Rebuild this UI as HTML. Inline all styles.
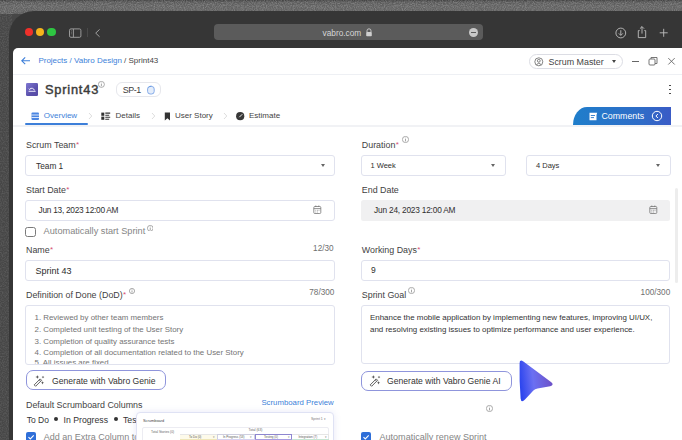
<!DOCTYPE html>
<html><head><meta charset="utf-8">
<style>
*{box-sizing:border-box;margin:0;padding:0}
html,body{width:682px;height:440px;overflow:hidden;background:#474747;font-family:"Liberation Sans",sans-serif}
.a{position:absolute}
.noise{left:0;top:0;width:682px;height:14px;background:linear-gradient(#3e3e3e,#5a5a5a 2px,#636363 6px,#5c5c5c)}
.frame{left:9.4px;top:11px;width:700px;height:460px;background:#363636;border-top-left-radius:25px}
.dot{width:8.4px;height:8.4px;border-radius:50%}
.url{left:214px;top:24px;width:269px;height:16px;background:#5b5b5b;border-radius:4px}
.content{left:13px;top:47.5px;width:700px;height:400px;background:#fff;border-top-left-radius:5px}
.t{white-space:nowrap;line-height:1}
.lbl{font-size:8.9px;color:#3f3f3f}
.req{color:#d64d72;font-size:8px;position:relative;top:-1.2px;left:0.4px}
.box{border:1px solid #e0e2ee;border-radius:3px;background:#fff}
.itxt{font-size:7.8px;color:#2f2f2f}
.caret{width:0;height:0;border-left:2.6px solid transparent;border-right:2.6px solid transparent;border-top:3px solid #666}
.info{width:7px;height:7px;border:0.7px solid #8a8a8a;border-radius:50%}
.cnt{font-size:8.2px;color:#6f6f6f}
</style></head><body>
<div class="a noise"></div>
<svg class="a" style="left:0;top:0" width="682" height="14"><filter id="nz" x="0" y="0" width="100%" height="100%"><feTurbulence type="fractalNoise" baseFrequency="0.9" numOctaves="2" seed="3"/><feColorMatrix type="matrix" values="0 0 0 0 0.5  0 0 0 0 0.5  0 0 0 0 0.5  1.6 0 0 0 -0.55"/></filter><rect width="682" height="14" filter="url(#nz)" opacity="0.5"/></svg>
<svg class="a" style="left:0;top:10px" width="12" height="430"><filter id="nz2" x="0" y="0" width="100%" height="100%"><feTurbulence type="fractalNoise" baseFrequency="0.8" numOctaves="2" seed="7"/><feColorMatrix type="matrix" values="0 0 0 0 0.45  0 0 0 0 0.45  0 0 0 0 0.45  1.2 0 0 0 -0.45"/></filter><rect width="12" height="430" filter="url(#nz2)" opacity="0.35"/></svg>
<div class="a frame"></div>
<!-- traffic lights -->
<div class="a dot" style="left:24.7px;top:27.8px;background:#f0302a"></div>
<div class="a dot" style="left:36px;top:27.8px;background:#f5b41c"></div>
<div class="a dot" style="left:47.2px;top:27.8px;background:#2ec542"></div>
<!-- sidebar icon -->
<svg class="a" style="left:68px;top:28px" width="15" height="11"><rect x="1.5" y="0.9" width="11.4" height="8.4" rx="1.4" stroke="#a0a0a0" stroke-width="0.95" fill="none"/><path d="M5.4 1 V9.3" stroke="#a0a0a0" stroke-width="0.95"/><path d="M3 2.8 H4 M3 4.3 H4 M3 5.8 H4" stroke="#8a8a8a" stroke-width="0.6"/></svg>
<div class="a" style="left:87.3px;top:28px;width:0.7px;height:9px;background:#4a4a4a"></div>
<svg class="a" style="left:93px;top:27px" width="9" height="12"><path d="M6.6 2.4 L2.7 6.1 L6.6 9.8" stroke="#a0a0a0" stroke-width="1" fill="none"/></svg>
<div class="a url"></div>
<div class="a t" style="left:322.5px;top:28.8px;font-size:8.3px;color:#d6d6d6">vabro.com</div>
<svg class="a" style="left:364.5px;top:27.5px" width="8" height="9"><path d="M2 4 V2.8 A2 2 0 0 1 6 2.8 V4" stroke="#cfcfcf" stroke-width="0.9" fill="none"/><rect x="1.2" y="4" width="5.6" height="4.3" rx="0.8" fill="#cfcfcf"/></svg>
<div class="a" style="left:468.5px;top:28px;width:9px;height:9px;border-radius:50%;background:#c8c8c8"></div>
<div class="a" style="left:470.5px;top:32px;width:5px;height:1px;background:#5b5b5b"></div>
<!-- right browser icons -->
<svg class="a" style="left:614px;top:26px" width="14" height="14"><circle cx="6.8" cy="7" r="4.9" stroke="#bdbdbd" stroke-width="0.9" fill="none"/><path d="M6.8 4.2 V9.2 M4.8 7.4 L6.8 9.4 L8.8 7.4" stroke="#bdbdbd" stroke-width="0.9" fill="none"/></svg>
<svg class="a" style="left:636px;top:25px" width="12" height="14"><path d="M3.7 5.6 H2.3 V12.6 H9.7 V5.6 H8.3 M6 1.6 V8.6 M3.9 3.7 L6 1.6 L8.1 3.7" stroke="#bdbdbd" stroke-width="0.9" fill="none"/></svg>
<svg class="a" style="left:658px;top:27px" width="12" height="12"><path d="M5.7 1.8 V9.8 M1.7 5.8 H9.7" stroke="#bdbdbd" stroke-width="0.9" fill="none"/></svg>

<div class="a content"></div>
<!-- header -->
<svg class="a" style="left:20px;top:56px" width="12" height="10"><path d="M10 4.8 H2 M5.2 1.4 L1.8 4.8 L5.2 8.2" stroke="#3d7fd9" stroke-width="1.1" fill="none"/></svg>
<div class="a t" style="left:38.4px;top:56.8px;font-size:8px;color:#3d7fd9">Projects / Vabro Design <span style="color:#444">/ Sprint43</span></div>
<div class="a" style="left:13px;top:73.5px;width:670px;height:1px;background:#eef0f4"></div>
<!-- scrum master -->
<div class="a" style="left:529px;top:54px;width:94px;height:15px;border:1px solid #dcdde4;border-radius:8px"></div>
<svg class="a" style="left:534px;top:56.5px" width="10" height="10"><circle cx="4.8" cy="4.8" r="4" stroke="#666" stroke-width="0.8" fill="none"/><circle cx="4.8" cy="3.8" r="1.4" stroke="#666" stroke-width="0.8" fill="none"/><path d="M2.4 7.6 Q4.8 4.8 7.2 7.6" stroke="#666" stroke-width="0.8" fill="none"/></svg>
<div class="a t" style="left:548.5px;top:57.5px;font-size:8.9px;color:#444">Scrum Master</div>
<div class="a caret" style="left:611.5px;top:60px;border-top-color:#444"></div>
<div class="a" style="left:631.5px;top:60.8px;width:7.5px;height:1px;background:#666"></div>
<svg class="a" style="left:648px;top:56px" width="11" height="11"><rect x="1" y="3" width="6" height="6" stroke="#666" stroke-width="0.9" fill="none" rx="1"/><path d="M3 3 V1.5 H9 V7.5 H7" stroke="#666" stroke-width="0.9" fill="none"/></svg>
<svg class="a" style="left:666.5px;top:57px" width="9" height="9"><path d="M1.3 1.1 L7.7 7.5 M7.7 1.1 L1.3 7.5" stroke="#666" stroke-width="0.9"/></svg>
<div class="a" style="left:669px;top:84.5px;width:1.6px;height:1.6px;background:#333;border-radius:50%"></div>
<div class="a" style="left:669px;top:88.6px;width:1.6px;height:1.6px;background:#333;border-radius:50%"></div>
<div class="a" style="left:669px;top:92.7px;width:1.6px;height:1.6px;background:#333;border-radius:50%"></div>

<!-- title -->
<div class="a" style="left:25.9px;top:83.1px;width:12.2px;height:12.5px;border-radius:1.3px;background:linear-gradient(135deg,#7f78d2,#5b51ac 60%,#564aa4)"></div>
<svg class="a" style="left:25.9px;top:83.1px" width="13" height="13"><path d="M3.6 6.3 A2.7 2.7 0 0 1 8.4 7.4 M2.6 8.3 H9.6" stroke="#f4f2ff" stroke-width="0.95" fill="none"/><path d="M2.8 5.6 L3.6 6.6 L4.6 5.8" stroke="#f4f2ff" stroke-width="0.8" fill="none"/></svg>
<div class="a t" style="left:45px;top:83.8px;font-size:12.8px;letter-spacing:0.8px;color:#3c3c3c;-webkit-text-stroke:0.45px #3c3c3c">Sprint43</div>
<svg class="a" style="left:98.4px;top:81.2px" width="6.8" height="6.8"><circle cx="3.4" cy="3.4" r="3.00" stroke="#8a8a8a" stroke-width="0.7" fill="none"/><path d="M3.4 2.80 V5.26" stroke="#8a8a8a" stroke-width="0.75"/><circle cx="3.4" cy="1.90" r="0.42" fill="#8a8a8a"/></svg>
<div class="a" style="left:116px;top:82px;width:44.8px;height:14.8px;border:1px solid #e6e7ec;border-radius:6px"></div>
<div class="a t" style="left:122.7px;top:85.6px;font-size:8.9px;letter-spacing:-0.4px;color:#3c3c3c">SP-1</div>
<svg class="a" style="left:145.5px;top:84.5px" width="10" height="10"><rect x="1.6" y="1.4" width="6.6" height="7.6" rx="2.6" stroke="#7ba4e6" stroke-width="0.9" fill="#e4edfa"/><path d="M2.6 2.6 Q3.4 1 5.6 1.2" stroke="#5b8fe0" stroke-width="0.8" fill="none"/></svg>

<!-- tabs -->
<svg class="a" style="left:30.5px;top:111.5px" width="9" height="9"><rect x="0.5" y="0.5" width="7.5" height="7.5" rx="1" fill="#4b86e2"/><path d="M0.5 3 H8 M0.5 5.5 H8" stroke="#fff" stroke-width="0.8"/></svg>
<div class="a t" style="left:43.8px;top:112px;font-size:8px;color:#3d7fd9">Overview</div>
<div class="a" style="left:25px;top:123px;width:63px;height:2px;background:#3d7fd9;border-radius:1px"></div>
<div class="a" style="left:13px;top:125px;width:670px;height:1.5px;background:#f1f2f5"></div>
<svg class="a" style="left:87.5px;top:112px" width="5" height="8"><path d="M1 1 L3.8 4 L1 7" stroke="#d4d4d4" stroke-width="0.8" fill="none"/></svg>
<svg class="a" style="left:101px;top:111.5px" width="10" height="9"><rect x="0.3" y="0.6" width="3" height="3.2" fill="#333"/><rect x="0.3" y="4.6" width="3" height="3.2" fill="#333"/><path d="M4.3 1.1 H9.2 M4.3 3.2 H8.2 M4.3 5.2 H9.2 M4.3 7.3 H8.2" stroke="#333" stroke-width="1.1"/></svg>
<div class="a t" style="left:115.5px;top:112px;font-size:8px;color:#444">Details</div>
<svg class="a" style="left:151px;top:112px" width="5" height="8"><path d="M1 1 L3.8 4 L1 7" stroke="#d4d4d4" stroke-width="0.8" fill="none"/></svg>
<svg class="a" style="left:163.5px;top:111.5px" width="7" height="9"><path d="M0.8 0.5 H6 V8.5 L3.4 6.3 L0.8 8.5 Z" fill="#333"/></svg>
<div class="a t" style="left:175px;top:112px;font-size:8px;color:#444">User Story</div>
<svg class="a" style="left:222.5px;top:112px" width="5" height="8"><path d="M1 1 L3.8 4 L1 7" stroke="#d4d4d4" stroke-width="0.8" fill="none"/></svg>
<svg class="a" style="left:235.5px;top:111.5px" width="9" height="9"><circle cx="4.2" cy="4.2" r="4.1" fill="#383838"/><path d="M3.6 4.9 L6 2.5" stroke="#fff" stroke-width="0.9" stroke-linecap="round"/></svg>
<div class="a t" style="left:249px;top:112px;font-size:8px;color:#444">Estimate</div>
<!-- comments tab -->
<div class="a" style="left:573px;top:107px;width:98px;height:18px;border-top-left-radius:14px 18px;background:linear-gradient(90deg,#1f7ecb,#2f6cc7 70%,#3a5bc6)"></div>
<svg class="a" style="left:589px;top:111.5px" width="9" height="9"><path d="M0.5 0.8 H8.2 L7.5 3 V8.2 H0.5 Z" fill="#fff"/><path d="M1.8 3.5 H6 M1.8 5.6 H5" stroke="#2878c9" stroke-width="0.9"/></svg>
<div class="a t" style="left:601.5px;top:111.5px;font-size:8.8px;color:#fff">Comments</div>
<svg class="a" style="left:650.5px;top:110px" width="12" height="12"><circle cx="6" cy="6" r="4.7" stroke="#fff" stroke-width="1" fill="none"/><path d="M6.9 4 L4.9 6 L6.9 8" stroke="#fff" stroke-width="1" fill="none"/></svg>

<!-- scrollbar -->
<div class="a" style="left:674.8px;top:187.5px;width:3.6px;height:95px;background:#ededed;border-radius:1.8px"></div>

<!-- LEFT COLUMN -->
<div class="a t lbl" style="left:26px;top:141px">Scrum Team<span class="req">*</span></div>
<div class="a box" style="left:25.4px;top:154.8px;width:309.6px;height:21.6px"></div>
<div class="a t itxt" style="left:36px;top:162px;font-size:8.3px">Team 1</div>
<div class="a caret" style="left:320.5px;top:164.3px"></div>

<div class="a t lbl" style="left:26px;top:186px">Start Date<span class="req">*</span></div>
<div class="a box" style="left:25.4px;top:199.8px;width:309.6px;height:21.6px"></div>
<div class="a t itxt" style="left:38.6px;top:205.7px;font-size:8.3px;letter-spacing:-0.27px">Jun 13, 2023 12:00 AM</div>
<svg class="a" style="left:313px;top:204.9px" width="9" height="10"><rect x="0.8" y="1.5" width="7" height="7" rx="1" stroke="#777" stroke-width="0.8" fill="none"/><path d="M0.8 3.6 H7.8 M2.8 0.5 V2 M5.8 0.5 V2" stroke="#777" stroke-width="0.8"/><path d="M2.4 5.3 H3.2 M4 5.3 H4.8 M5.6 5.3 H6.4 M2.4 7 H3.2 M4 7 H4.8" stroke="#777" stroke-width="0.7"/></svg>

<div class="a" style="left:25.3px;top:227px;width:10.5px;height:10px;border:1px solid #7a7a7a;border-radius:2.5px"></div>
<div class="a t" style="left:43.6px;top:227.3px;font-size:9.2px;color:#858585">Automatically start Sprint</div>
<svg class="a" style="left:146.5px;top:224.5px" width="6.5" height="6.5"><circle cx="3.25" cy="3.25" r="2.85" stroke="#8a8a8a" stroke-width="0.7" fill="none"/><path d="M3.25 2.65 V5.02" stroke="#8a8a8a" stroke-width="0.75"/><circle cx="3.25" cy="1.82" r="0.42" fill="#8a8a8a"/></svg>

<div class="a t lbl" style="left:26px;top:246.3px">Name<span class="req">*</span></div>
<div class="a t cnt" style="left:313.1px;top:244.8px">12/30</div>
<div class="a box" style="left:25.4px;top:259.8px;width:309.6px;height:21.6px"></div>
<div class="a t itxt" style="left:35.6px;top:267.2px;font-size:9px;color:#2d2d2d">Sprint 43</div>

<div class="a t lbl" style="left:26px;top:291.3px">Definition of Done (DoD)<span class="req">*</span></div>
<svg class="a" style="left:129.0px;top:288.0px" width="6.0" height="6.0"><circle cx="3.0" cy="3.0" r="2.60" stroke="#8a8a8a" stroke-width="0.7" fill="none"/><path d="M3.0 2.40 V4.61" stroke="#8a8a8a" stroke-width="0.75"/><circle cx="3.0" cy="1.70" r="0.42" fill="#8a8a8a"/></svg>
<div class="a t cnt" style="left:309.3px;top:289.3px">78/300</div>
<div class="a" style="left:26px;top:305.2px;width:309px;height:59.5px;overflow:hidden">
  <div class="t" style="position:absolute;left:8.5px;top:7px;font-size:7.9px;color:#747474;line-height:11.7px">1. Reviewed by other team members<br>2. Completed unit testing of the User Story<br>3. Completion of quality assurance tests<br>4. Completion of all documentation related to the User Story</div>
  <div class="t" style="position:absolute;left:8.5px;top:52.3px;font-size:7.9px;color:#747474;line-height:11.7px">5. All issues are fixed</div>
</div>
<div class="a box" style="left:25.4px;top:304.7px;width:309.6px;height:60px;background:transparent"></div>
<div class="a" style="left:26px;top:370.2px;width:140px;height:20px;border:1px solid #8f95dc;border-radius:7px"></div>
<svg class="a" style="left:33px;top:374.5px" width="12" height="13"><path d="M1.2 9.9 L7.2 3.9 L8.6 5.3 L2.6 11.3 Z" stroke="#3a3a3a" stroke-width="0.8" fill="none" stroke-linejoin="round"/><path d="M6.2 4.9 L7.6 6.3" stroke="#3a3a3a" stroke-width="0.7"/><path d="M4.3 0.10000000000000009 L4.7 1.6 L6.199999999999999 2.0 L4.7 2.4 L4.3 3.9 L3.9 2.4 L2.4 2.0 L3.9 1.6Z M10.0 0.7000000000000002 L10.35 1.75 L11.4 2.1 L10.35 2.45 L10.0 3.5 L9.65 2.45 L8.6 2.1 L9.65 1.75Z M9.5 6.1 L9.9 7.3999999999999995 L11.2 7.8 L9.9 8.2 L9.5 9.5 L9.1 8.2 L7.8 7.8 L9.1 7.3999999999999995Z" fill="#3a3a3a"/></svg>
<div class="a t" style="left:52px;top:376.6px;font-size:8.6px;color:#333">Generate with Vabro Genie</div>

<div class="a t lbl" style="left:26px;top:400.5px;color:#444">Default Scrumboard Columns</div>
<div class="a t" style="left:261.4px;top:398.5px;font-size:7.8px;color:#3d7fd9">Scrumboard Preview</div>
<div class="a t" style="left:26.7px;top:415.5px;font-size:8.5px;color:#333">To Do</div>
<div class="a" style="left:54px;top:417.3px;width:4px;height:4px;border-radius:50%;background:#333"></div>
<div class="a t" style="left:63.6px;top:415.5px;font-size:8.7px;color:#333">In Progress</div>
<div class="a" style="left:114px;top:417.3px;width:4px;height:4px;border-radius:50%;background:#333"></div>
<div class="a t" style="left:123px;top:415.5px;font-size:8.7px;color:#333">Testing</div>
<div class="a" style="left:25.5px;top:432px;width:10px;height:10px;background:#2f6fd8;border-radius:2px"></div>
<svg class="a" style="left:25.5px;top:432px" width="10" height="10"><path d="M2.5 5.2 L4.3 7 L7.7 3.4" stroke="#fff" stroke-width="1.1" fill="none"/></svg>
<div class="a t" style="left:43.8px;top:433.4px;font-size:9px;color:#858585">Add an Extra Column to Scrumboard</div>

<!-- popup preview -->
<div class="a" style="left:136.4px;top:412.3px;width:198px;height:40px;background:#fff;border:1px solid #dfe2f4;border-radius:4px;box-shadow:0 0 7px rgba(110,125,210,0.16)"></div>
<div class="a t" style="left:143px;top:419px;font-size:3.9px;color:#444">Scrumboard</div>
<div class="a t" style="left:311px;top:417.6px;font-size:3.4px;color:#777">Sprint 1 ▾</div>
<div class="a" style="left:142px;top:426.6px;width:186.5px;height:20px;border:0.6px solid #ececf2;border-radius:2px"></div>
<div class="a t" style="left:151px;top:431.3px;font-size:3.3px;color:#666">Total Stories (0)</div>
<div class="a t" style="left:248.6px;top:429px;font-size:3.3px;color:#666">Total (63)</div>
<div class="a" style="left:180.3px;top:434.2px;width:37px;height:8px;background:#fdfaea;border-top:0.6px solid #e6e6e6"></div>
<div class="a" style="left:217px;top:434.2px;width:37.6px;height:8px;border:0.6px solid #cfcfe0;border-bottom:0"></div>
<div class="a" style="left:254.6px;top:434.2px;width:37px;height:8px;border:0.6px solid #8e86d0;border-bottom:0"></div>
<div class="a" style="left:291.6px;top:434.2px;width:37px;height:8px;border-top:0.6px solid #e6e6e6;border-right:0.6px solid #e6e6e6"></div>
<div class="a" style="left:180.3px;top:439px;width:37px;height:1px;background:#efe6b8"></div>
<div class="a" style="left:217px;top:439px;width:37.6px;height:1px;background:#d6d1f0"></div>
<div class="a" style="left:254.6px;top:439px;width:37px;height:1px;background:#a89ce0"></div>
<div class="a" style="left:291.6px;top:439px;width:37px;height:1px;background:#c6e6d2"></div>
<div class="a t" style="left:189px;top:436.2px;font-size:3px;color:#555">To Do (0)</div>
<div class="a t" style="left:213px;top:436px;font-size:3px;color:#888">▾</div>
<div class="a t" style="left:223px;top:436.2px;font-size:3px;color:#555">In Progress (53)</div>
<div class="a t" style="left:249.5px;top:436px;font-size:3px;color:#888">▾</div>
<div class="a t" style="left:264px;top:436.2px;font-size:3px;color:#555">Testing (0)</div>
<div class="a t" style="left:287.5px;top:436px;font-size:3px;color:#888">▾</div>
<div class="a t" style="left:298.5px;top:436.2px;font-size:3px;color:#555">Integration (7)</div>
<div class="a t" style="left:324.5px;top:436px;font-size:3px;color:#888">▾</div>

<!-- RIGHT COLUMN -->
<div class="a t lbl" style="left:361.8px;top:141px">Duration<span class="req">*</span></div>
<svg class="a" style="left:401.8px;top:136.1px" width="7.0" height="7.0"><circle cx="3.5" cy="3.5" r="3.10" stroke="#8a8a8a" stroke-width="0.7" fill="none"/><path d="M3.5 2.90 V5.42" stroke="#8a8a8a" stroke-width="0.75"/><circle cx="3.5" cy="1.95" r="0.42" fill="#8a8a8a"/></svg>
<div class="a box" style="left:360.9px;top:154.8px;width:145.3px;height:21.6px"></div>
<div class="a t itxt" style="left:370.5px;top:162px;font-size:7.5px">1 Week</div>
<div class="a caret" style="left:491px;top:164.3px"></div>
<div class="a box" style="left:525.9px;top:154.8px;width:145.3px;height:21.6px"></div>
<div class="a t itxt" style="left:536px;top:162px;font-size:7.5px">4 Days</div>
<div class="a caret" style="left:656px;top:164.3px"></div>

<div class="a t lbl" style="left:361.8px;top:186px">End Date</div>
<div class="a" style="left:361px;top:199.9px;width:309px;height:20.8px;background:#f0f0f1;border-radius:2.5px"></div>
<div class="a t itxt" style="left:374.1px;top:205.9px;font-size:8.3px;letter-spacing:-0.2px">Jun 24, 2023 12:00 AM</div>
<svg class="a" style="left:648.5px;top:204.9px" width="9" height="10"><rect x="0.8" y="1.5" width="7" height="7" rx="1" stroke="#777" stroke-width="0.8" fill="none"/><path d="M0.8 3.6 H7.8 M2.8 0.5 V2 M5.8 0.5 V2" stroke="#777" stroke-width="0.8"/><path d="M2.4 5.3 H3.2 M4 5.3 H4.8 M5.6 5.3 H6.4 M2.4 7 H3.2 M4 7 H4.8" stroke="#777" stroke-width="0.7"/></svg>

<div class="a t lbl" style="left:361.8px;top:246.3px">Working Days<span class="req">*</span></div>
<div class="a box" style="left:360.9px;top:259.8px;width:309.6px;height:21.6px"></div>
<div class="a t itxt" style="left:371px;top:266px;font-size:8.5px">9</div>

<div class="a t lbl" style="left:361.8px;top:291.3px">Sprint Goal</div>
<svg class="a" style="left:407.8px;top:286.5px" width="7.0" height="7.0"><circle cx="3.5" cy="3.5" r="3.10" stroke="#8a8a8a" stroke-width="0.7" fill="none"/><path d="M3.5 2.90 V5.42" stroke="#8a8a8a" stroke-width="0.75"/><circle cx="3.5" cy="1.95" r="0.42" fill="#8a8a8a"/></svg>
<div class="a t cnt" style="left:640.6px;top:289.3px">100/300</div>
<div class="a box" style="left:360.9px;top:304.8px;width:309.6px;height:59.3px"></div>
<div class="a t" style="left:370px;top:312.4px;font-size:7.95px;color:#333;line-height:11.5px">Enhance the mobile application by implementing new features, improving UI/UX,<br>and resolving existing issues to optimize performance and user experience.</div>
<div class="a" style="left:361px;top:370.5px;width:151px;height:20px;border:1px solid #8f95dc;border-radius:7px"></div>
<svg class="a" style="left:368.5px;top:374.5px" width="12" height="13"><path d="M1.2 9.9 L7.2 3.9 L8.6 5.3 L2.6 11.3 Z" stroke="#3a3a3a" stroke-width="0.8" fill="none" stroke-linejoin="round"/><path d="M6.2 4.9 L7.6 6.3" stroke="#3a3a3a" stroke-width="0.7"/><path d="M4.3 0.10000000000000009 L4.7 1.6 L6.199999999999999 2.0 L4.7 2.4 L4.3 3.9 L3.9 2.4 L2.4 2.0 L3.9 1.6Z M10.0 0.7000000000000002 L10.35 1.75 L11.4 2.1 L10.35 2.45 L10.0 3.5 L9.65 2.45 L8.6 2.1 L9.65 1.75Z M9.5 6.1 L9.9 7.3999999999999995 L11.2 7.8 L9.9 8.2 L9.5 9.5 L9.1 8.2 L7.8 7.8 L9.1 7.3999999999999995Z" fill="#3a3a3a"/></svg>
<div class="a t" style="left:387px;top:376.6px;font-size:8.6px;color:#333">Generate with Vabro Genie AI</div>
<svg class="a" style="left:486.2px;top:405.2px" width="7.0" height="7.0"><circle cx="3.5" cy="3.5" r="3.10" stroke="#8a8a8a" stroke-width="0.7" fill="none"/><path d="M3.5 2.90 V5.42" stroke="#8a8a8a" stroke-width="0.75"/><circle cx="3.5" cy="1.95" r="0.42" fill="#8a8a8a"/></svg>
<div class="a" style="left:361px;top:432px;width:10px;height:10px;background:#2f6fd8;border-radius:2px"></div>
<svg class="a" style="left:361px;top:432px" width="10" height="10"><path d="M2.5 5.2 L4.3 7 L7.7 3.4" stroke="#fff" stroke-width="1.1" fill="none"/></svg>
<div class="a t" style="left:379.5px;top:433.4px;font-size:9.05px;color:#858585">Automatically renew Sprint</div>

<!-- cursor -->
<svg class="a" style="left:515px;top:355px" width="44" height="50">
  <defs><linearGradient id="cg" x1="0" y1="0.45" x2="1" y2="0.3"><stop offset="0" stop-color="#2c45ee"/><stop offset="0.4" stop-color="#6b70f2"/><stop offset="1" stop-color="#6d4fc4"/></linearGradient></defs>
  <path d="M4.6 8.5 Q4.5 3.8 8.4 6.6 L36 27 Q39.6 29.9 35.2 31.2 L22.5 33.4 Q20 33.9 18.4 35.6 L10 44.6 Q6.2 48.4 5.6 43.4 Q4.2 26 4.6 8.5 Z" fill="url(#cg)"/>
</svg>
</body></html>
